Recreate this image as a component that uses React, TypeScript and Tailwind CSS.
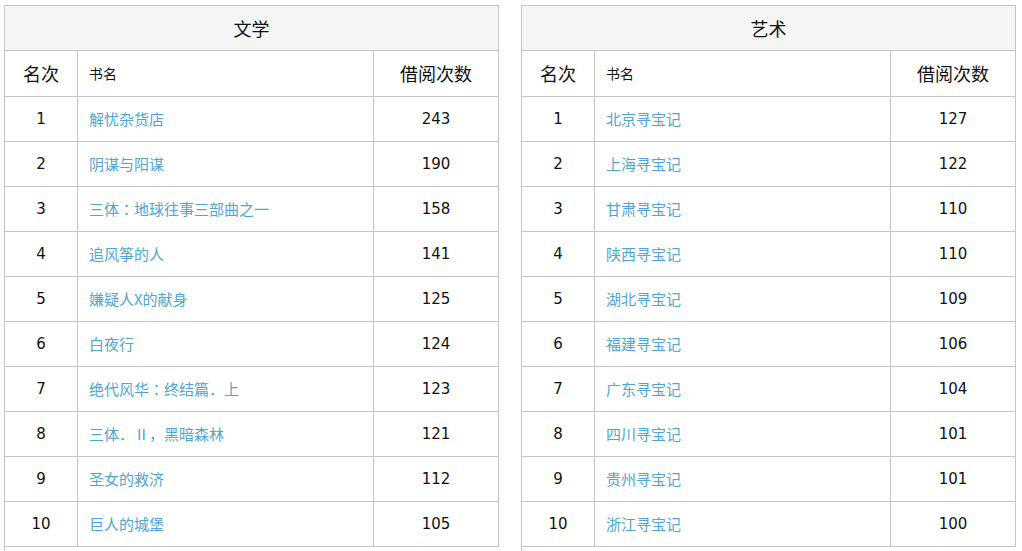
const literature: [string, number][] = [
  ["解忧杂货店", 243],
  ["阴谋与阳谋", 190],
  ["三体：地球往事三部曲之一", 158],
  ["追风筝的人", 141],
  ["嫌疑人X的献身", 125],
  ["白夜行", 124],
  ["绝代风华：终结篇．上", 123],
  ["三体．Ⅱ，黑暗森林", 121],
  ["圣女的救济", 112],
  ["巨人的城堡", 105],
];

const art: [string, number][] = [
  ["北京寻宝记", 127],
  ["上海寻宝记", 122],
  ["甘肃寻宝记", 110],
  ["陕西寻宝记", 110],
  ["湖北寻宝记", 109],
  ["福建寻宝记", 106],
  ["广东寻宝记", 104],
  ["四川寻宝记", 101],
  ["贵州寻宝记", 101],
  ["浙江寻宝记", 100],
];

const cjk = "font-['Microsoft_YaHei','Noto_Sans_CJK_SC',sans-serif]";
const num = "font-['DejaVu_Sans','Noto_Sans_CJK_SC',sans-serif]";

// the full-width colon sits centred in the original, as the TC glyph does
function BookName({ name }: { name: string }) {
  return (
    <>
      {name.split(/(：)/).map((part, i) =>
        part === "：" ? (
          <span key={i} className="font-['Noto_Sans_CJK_TC',sans-serif]">
            {part}
          </span>
        ) : (
          <span key={i}>{part}</span>
        )
      )}
    </>
  );
}

function RankTable({ title, rows }: { title: string; rows: [string, number][] }) {
  return (
    <div className="w-[495px] border-l border-t border-[#c4c4c4] text-[#111]">
      <div
        className={`h-[45px] flex items-center justify-center bg-[#f5f5f5] border-r border-b border-[#c4c4c4] text-[18px] ${cjk}`}
      >
        {title}
      </div>
      <div className="flex h-[46px]">
        <div
          className={`w-[73px] flex items-center justify-center border-r border-b border-[#c4c4c4] text-[18px] ${cjk}`}
        >
          名次
        </div>
        <div
          className={`w-[296px] flex items-center pl-[11px] border-r border-b border-[#c4c4c4] text-[14px] ${cjk}`}
        >
          书名
        </div>
        <div
          className={`w-[125px] flex items-center justify-center border-r border-b border-[#c4c4c4] text-[18px] ${cjk}`}
        >
          借阅次数
        </div>
      </div>
      {rows.map(([name, count], i) => (
        <div key={i} className="flex h-[45px]">
          <div
            className={`w-[73px] flex items-center justify-center pt-px border-r border-b border-[#c4c4c4] text-[15px] ${num}`}
          >
            {i + 1}
          </div>
          <div
            className={`w-[296px] flex items-center pl-[11px] border-r border-b border-[#c4c4c4] text-[15px] text-[#4fa6cf] ${cjk}`}
          >
            <BookName name={name} />
          </div>
          <div
            className={`w-[125px] flex items-center justify-center pt-px border-r border-b border-[#c4c4c4] text-[15px] ${num}`}
          >
            {count}
          </div>
        </div>
      ))}
    </div>
  );
}

export default function App() {
  return (
    <div className="w-[1022px] h-[551px] bg-white pl-[4px] pt-[5px] flex gap-[22px]">
      <RankTable title="文学" rows={literature} />
      <RankTable title="艺术" rows={art} />
    </div>
  );
}
